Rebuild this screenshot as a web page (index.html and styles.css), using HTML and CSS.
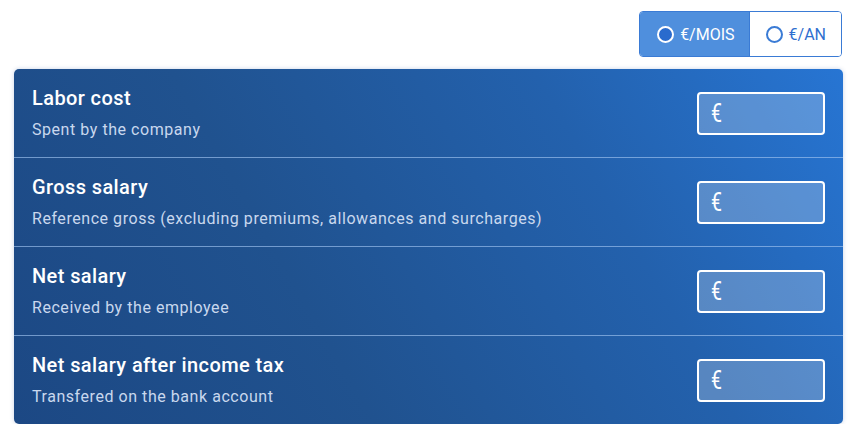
FILE: index.html
```html
<!DOCTYPE html>
<html lang="en">
<head>
<meta charset="utf-8">
<link rel="stylesheet" href="styles.css">
</head>
<body>
<div class="page">
  <div class="toolbar">
    <div class="toggle">
      <label class="opt active"><span class="radio"></span>€/MOIS</label>
      <label class="opt"><span class="radio"></span>€/AN</label>
    </div>
  </div>
  <div class="card">
    <div class="row">
      <div class="text">
        <div class="title">Labor cost</div>
        <div class="sub">Spent by the company</div>
      </div>
      <div class="field"><span class="cur">€</span></div>
    </div>
    <div class="row">
      <div class="text">
        <div class="title">Gross salary</div>
        <div class="sub">Reference gross (excluding premiums, allowances and surcharges)</div>
      </div>
      <div class="field"><span class="cur">€</span></div>
    </div>
    <div class="row">
      <div class="text">
        <div class="title">Net salary</div>
        <div class="sub">Received by the employee</div>
      </div>
      <div class="field"><span class="cur">€</span></div>
    </div>
    <div class="row">
      <div class="text">
        <div class="title">Net salary after income tax</div>
        <div class="sub">Transfered on the bank account</div>
      </div>
      <div class="field"><span class="cur">€</span></div>
    </div>
  </div>
</div>
</body>
</html>
```
FILE: styles.css
```css
html, body { margin: 0; padding: 0; background: #ffffff; }
body { font-family: Roboto, "Liberation Sans", sans-serif; }
.page { padding: 11px 14px 0 14px; }
.toolbar { display: flex; justify-content: flex-end; padding-right: 1px; }
.toggle {
  display: flex;
  border: 1px solid #3a7bd5;
  border-radius: 4px;
  overflow: hidden;
  height: 44px;
}
.opt {
  display: flex;
  align-items: center;
  gap: 6px;
  font-size: 16px;
  color: #2f6fcf;
  background: #fff;
  padding: 0 15px 0 16px;
}
.opt + .opt { border-left: 1px solid #3a7bd5; }
.opt.active { background: #4f8fdd; color: #fff; padding: 0 14px 0 17px; }
.radio {
  width: 13px; height: 13px;
  border-radius: 50%;
  border: 2px solid #3a7bd5;
  background: #fff;
  box-sizing: content-box;
}
.opt.active .radio { border-color: #fff; background: #2a6bcd; }
.card {
  margin-top: 12px;
  border-radius: 5px;
  background: linear-gradient(60deg, #1c4884 0%, #20528f 35%, #2361ad 70%, #2775d3 100%);
  box-shadow: 0 0 4px rgba(40, 80, 160, 0.25);
  overflow: hidden;
}
.row {
  display: flex;
  align-items: center;
  justify-content: space-between;
  height: 88px;
  padding: 0 18px 0 18px;
  border-top: 1px solid rgba(160, 195, 240, 0.65);
}
.row:first-child { border-top: none; height: 88px; }
.title { font-size: 20px; font-weight: 500; color: #fff; line-height: 24px; letter-spacing: 0.4px; }
.sub { font-size: 16px; color: #c9d8ee; margin-top: 10px; line-height: 20px; letter-spacing: 0.55px; }
.field {
  height: 39px;
  border: 2px solid #fff;
  border-radius: 4px;
  background: rgba(255, 255, 255, 0.24);
  display: flex; align-items: center;
  padding-left: 12px;
  box-sizing: content-box;
  width: 112px;
  margin-top: 1px;
}
.cur { font-family: Roboto, sans-serif; font-weight: 400; font-size: 25px; line-height: 1; color: #fff; transform: scaleX(0.78); transform-origin: left center; display: inline-block; }
```
